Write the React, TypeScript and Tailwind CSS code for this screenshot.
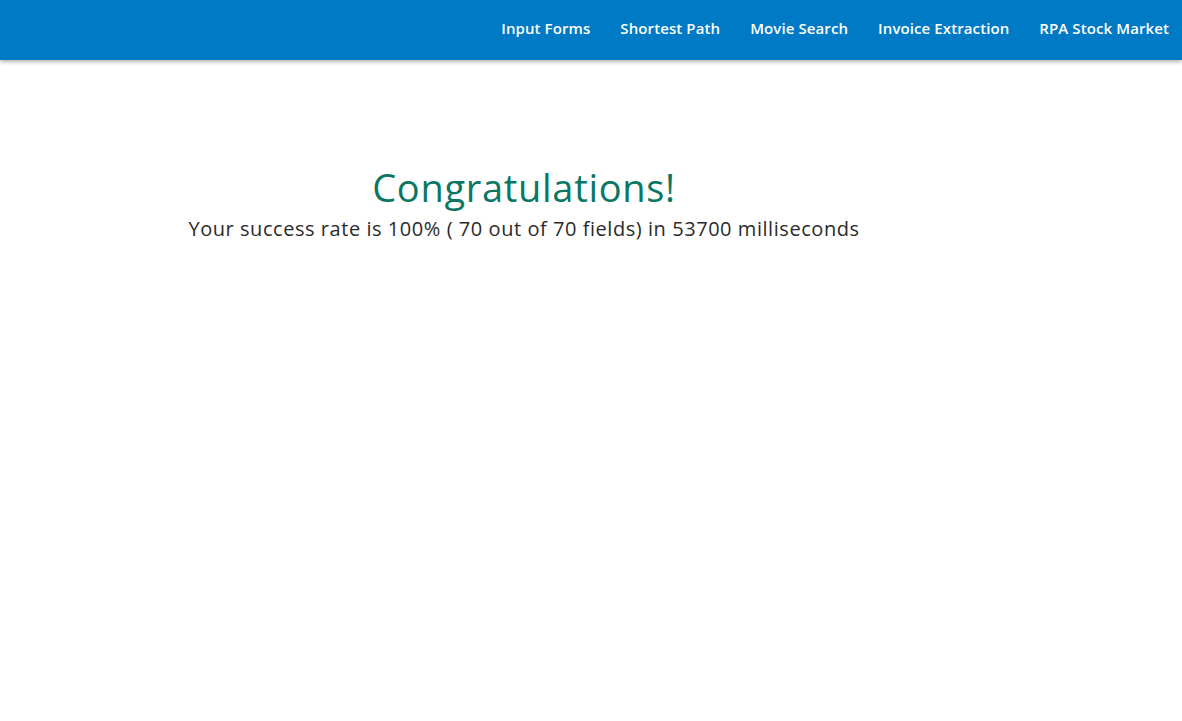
import React from "react";

const links = ["Input Forms", "Shortest Path", "Movie Search", "Invoice Extraction", "RPA Stock Market"];

export default function App() {
  return (
    <div className="min-h-[721px] bg-white" style={{ fontFamily: '"Open Sans", "Liberation Sans", sans-serif' }}>
      <header className="h-[60px] bg-[#007ac4] shadow-[0_2px_4px_rgba(0,0,0,0.3)] flex items-center justify-end pr-[13px] pb-[4px]">
        <nav className="flex gap-[30px]">
          {links.map((l) => (
            <a key={l} className="text-white text-[15px] font-semibold tracking-[0.1px]">
              {l}
            </a>
          ))}
        </nav>
      </header>
      <main className="w-[1048px] text-center pt-[103px]">
        <h1 className="text-[#0b7763] text-[38px] leading-[48px] font-normal tracking-[0.7px]">Congratulations!</h1>
        <p className="text-[#2b2b2b] text-[20px] leading-[28px] mt-[4px] tracking-[0.55px]">
          Your success rate is 100% ( 70 out of 70 fields) in 53700 milliseconds
        </p>
      </main>
    </div>
  );
}
